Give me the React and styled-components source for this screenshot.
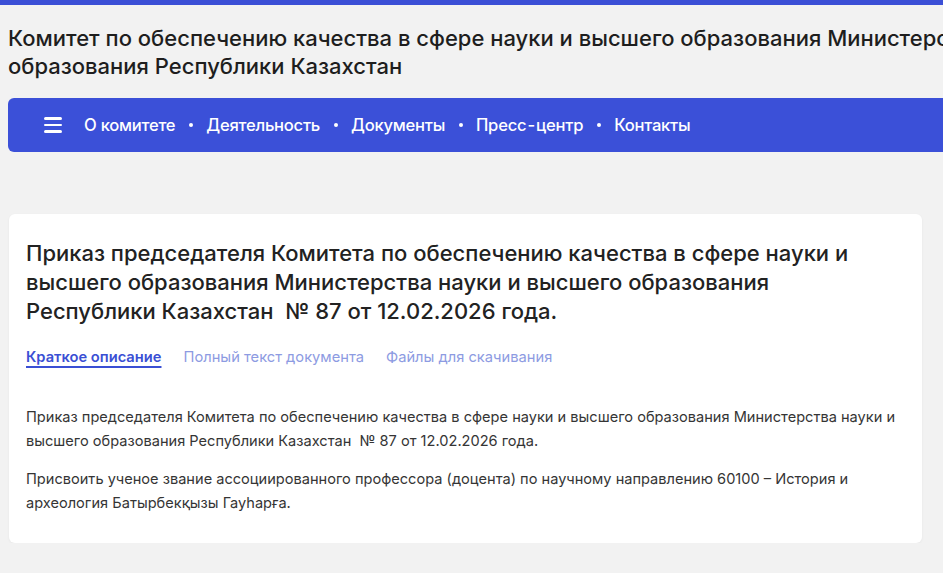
import React from 'react';
import styled, { createGlobalStyle } from 'styled-components';

const Global = createGlobalStyle`
  html, body {
    margin: 0;
    padding: 0;
    background: #f2f2f2;
    overflow: hidden;
    font-family: Inter, "Noto Sans", "Liberation Sans", sans-serif;
  }
`;

const TopStripe = styled.div`
  height: 5px;
  background: #3b4fd6;
`;

const Page = styled.div`
  width: 1120px;
  padding: 0 0 0 8px;
`;

const SiteTitle = styled.h1`
  margin: 19px 0 0;
  font-size: 22px;
  line-height: 28px;
  font-weight: 500;
  color: #1e1e1e;
  white-space: nowrap;
`;

const Nav = styled.nav`
  margin-top: 18px;
  height: 54px;
  background: #3b50d8;
  border-radius: 6px;
  display: flex;
  align-items: center;
  padding-left: 36px;
`;

const Burger = styled.div`
  width: 18px;
  display: flex;
  flex-direction: column;
  gap: 4px;
  margin-right: 22px;
  span {
    height: 2.5px;
    border-radius: 2px;
    background: #fff;
  }
`;

const NavList = styled.ul`
  display: flex;
  align-items: center;
  list-style: none;
  margin: 0;
  padding: 0;
`;

const NavItem = styled.li`
  color: #fff;
  font-size: 16.6px;
  font-weight: 500;
  letter-spacing: -0.25px;
  display: flex;
  align-items: center;
  &:not(:first-child)::before {
    content: '';
    width: 4px;
    height: 4px;
    border-radius: 50%;
    background: #fff;
    margin: 0 13.5px;
  }
`;

const Card = styled.section`
  margin-top: 62px;
  width: 913px;
  margin-left: 1px;
  box-sizing: border-box;
  background: #fff;
  border-radius: 6px;
  box-shadow: 0 1px 3px rgba(0, 0, 0, 0.05);
  padding: 25px 17px 28px;
`;

const DocTitle = styled.h2`
  margin: 0;
  font-size: 22px;
  line-height: 29px;
  font-weight: 500;
  color: #222;
`;

const Tabs = styled.div`
  display: flex;
  gap: 22px;
  margin-top: 22px;
`;

const Tab = styled.a`
  font-size: 14.7px;
  font-weight: ${p => (p.$active ? 600 : 400)};
  color: ${p => (p.$active ? '#3a4fd4' : '#8d9be2')};
  text-decoration: ${p => (p.$active ? 'underline' : 'none')};
  text-underline-offset: 4px;
  text-decoration-thickness: 1.5px;
  cursor: pointer;
`;

const Body = styled.div`
  margin-top: 39px;
`;

const Para = styled.p`
  margin: 0 0 14px;
  font-size: 14.6px;
  line-height: 24px;
  color: #353535;
  &:last-child {
    margin-bottom: 0;
  }
`;

const navItems = ['О комитете', 'Деятельность', 'Документы', 'Пресс\u200a-\u200aцентр', 'Контакты'];

export default function App() {
  return (
    <>
      <Global />
      <TopStripe />
      <Page>
        <SiteTitle>
          Комитет по обеспечению качества в сфере науки и высшего образования Министерства науки и высшего
          <br />
          образования Республики Казахстан
        </SiteTitle>
        <Nav>
          <Burger>
            <span />
            <span />
            <span />
          </Burger>
          <NavList>
            {navItems.map(item => (
              <NavItem key={item}>{item}</NavItem>
            ))}
          </NavList>
        </Nav>
        <Card>
          <DocTitle>
            Приказ председателя Комитета по обеспечению качества в сфере науки и
            <br />
            высшего образования Министерства науки и высшего образования
            <br />
            Республики Казахстан&nbsp; № 87 от 12.02.2026 года.
          </DocTitle>
          <Tabs>
            <Tab $active>Краткое описание</Tab>
            <Tab>Полный текст документа</Tab>
            <Tab>Файлы для скачивания</Tab>
          </Tabs>
          <Body>
            <Para>
              Приказ председателя Комитета по обеспечению качества в сфере науки и высшего образования Министерства науки и
              <br />
              высшего образования Республики Казахстан&nbsp; № 87 от 12.02.2026 года.
            </Para>
            <Para>
              Присвоить ученое звание ассоциированного профессора (доцента) по научному направлению 60100 – История и
              <br />
              археология Батырбекқызы Гауһарға.
            </Para>
          </Body>
        </Card>
      </Page>
    </>
  );
}
